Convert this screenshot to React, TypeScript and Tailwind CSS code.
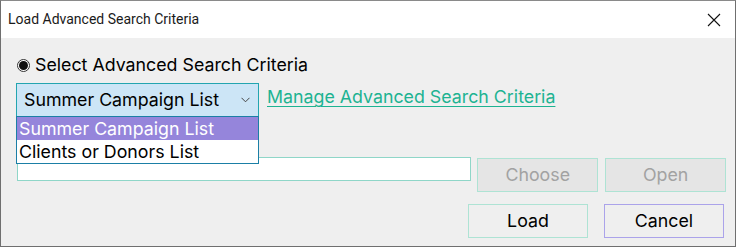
import { useState } from 'react';

const options = ['Summer Campaign List', 'Clients or Donors List'];

export default function App() {
  const [selected, setSelected] = useState(0);
  const [hovered, setHovered] = useState(0);

  return (
    <div className="w-[736px] h-[247px] bg-[#efefef] border border-t-[#8a8a8a] border-[#6f6f6f] flex flex-col font-['Inter',sans-serif] text-black overflow-hidden">
      {/* title bar */}
      <div className="h-[37px] shrink-0 bg-white flex items-center justify-between pl-[7px] pr-[14px]">
        <span className="font-['Liberation_Sans_Narrow','Roboto',sans-serif] text-[14px] text-[#1a1a1a]">
          Load Advanced Search Criteria
        </span>
        <svg width="14" height="14" viewBox="0 0 14 14" className="text-[#111]">
          <path d="M1 1 L13 13 M13 1 L1 13" stroke="currentColor" strokeWidth="1.1" />
        </svg>
      </div>

      <div className="flex flex-col pl-[15px] pr-[9px] text-[17.8px]">
        {/* radio row */}
        <label className="mt-[17px] flex items-center gap-[5px] h-[20px] leading-none">
          <span className="ml-[1px] w-[13px] h-[13px] rounded-full border border-[#333] flex items-center justify-center bg-white">
            <span className="w-[9px] h-[9px] rounded-full bg-[#111]" />
          </span>
          Select Advanced Search Criteria
        </label>

        {/* combobox row */}
        <div className="mt-[8px] flex items-center gap-[8px]">
          <div className="relative">
            <button className="w-[243px] h-[34px] bg-[#cce5f6] border border-[#23a5b0] flex items-center justify-between pl-[7px] pr-[8px]">
              <span>{options[selected]}</span>
              <svg width="9" height="6" viewBox="0 0 9 6" className="text-[#444]">
                <path d="M0.5 0.8 L4.5 4.8 L8.5 0.8" fill="none" stroke="currentColor" strokeWidth="1" />
              </svg>
            </button>
            <ul className="absolute left-0 top-[33px] z-10 w-[243px] bg-white border border-[#1b7fa6] leading-none">
              {options.map((o, i) => (
                <li
                  key={o}
                  onMouseEnter={() => setHovered(i)}
                  onClick={() => setSelected(i)}
                  className={
                    i === hovered
                      ? 'h-[23px] flex items-center pl-[2px] bg-[#9585db] text-white'
                      : 'h-[23px] flex items-center pl-[2px] bg-white text-black'
                  }
                >
                  {o}
                </li>
              ))}
            </ul>
          </div>
          <a href="#" className="text-[#1db392] underline underline-offset-[3px] decoration-1 -mt-[5px]">
            Manage Advanced Search Criteria
          </a>
        </div>

        {/* file row */}
        <div className="mt-[40px] flex items-start">
          <input className="ml-[1px] w-[455px] h-[24px] bg-white border border-[#8fd6c8] outline-none" />
          <button disabled className="ml-[6px] mt-[1px] w-[121px] h-[34px] bg-[#e5e5e5] border border-[#aee3d4] text-[#a2a2a2]">
            Choose
          </button>
          <button disabled className="ml-[7px] mt-[1px] w-[121px] h-[34px] bg-[#e5e5e5] border border-[#aee3d4] text-[#a2a2a2]">
            Open
          </button>
        </div>

        {/* actions */}
        <div className="mt-[12px] flex justify-end gap-[16px] pr-[2px]">
          <button className="w-[120px] h-[34px] bg-[#efefef] border border-[#aee3d4]">Load</button>
          <button className="w-[120px] h-[34px] bg-[#efefef] border border-[#aba3ea]">Cancel</button>
        </div>
      </div>
    </div>
  );
}
